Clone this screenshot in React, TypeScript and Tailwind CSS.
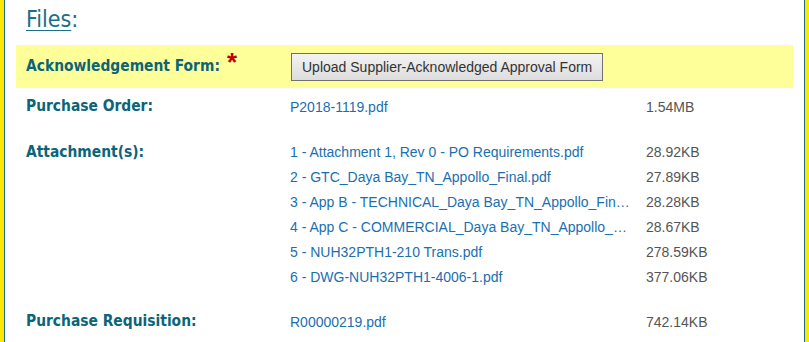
import React from "react";

const attachments = [
  { name: "1 - Attachment 1, Rev 0 - PO Requirements.pdf", size: "28.92KB" },
  { name: "2 - GTC_Daya Bay_TN_Appollo_Final.pdf", size: "27.89KB" },
  { name: "3 - App B - TECHNICAL_Daya Bay_TN_Appollo_Final.pdf", size: "28.28KB" },
  { name: "4 - App C - COMMERCIAL_Daya Bay_TN_Appollo_Final.pdf", size: "28.67KB" },
  { name: "5 - NUH32PTH1-210 Trans.pdf", size: "278.59KB" },
  { name: "6 - DWG-NUH32PTH1-4006-1.pdf", size: "377.06KB" },
];

const labelCls =
  "w-[264px] shrink-0 font-bold text-[15.4px] text-[#0b6478] [font-family:'DejaVu_Sans_Condensed','DejaVu_Sans',sans-serif] [font-stretch:condensed]";
const linkCls =
  "block w-[342px] truncate text-[14px] text-[#1a6fb0] [font-family:'Liberation_Sans',Arial,sans-serif]";
const sizeCls =
  "text-[14px] text-[#555555] [font-family:'Liberation_Sans',Arial,sans-serif]";

export default function App() {
  return (
    <div className="w-[809px] h-[342px] overflow-hidden bg-[#ffe600] px-[4px]">
      <div className="h-full border-x border-[#1b6f86] bg-white">
        <div className="pl-[21px] pt-[3px] h-[45px] text-[23px] leading-[32px] text-[#1b6f86] [font-family:'DejaVu_Sans_Condensed','DejaVu_Sans',sans-serif] [font-stretch:condensed]">
          <span className="underline underline-offset-[3px] decoration-1">Files</span>:
        </div>

        <div className="mx-[11px] h-[43px] bg-[#ffff99] pl-[10px] flex items-center">
          <div className={labelCls + " pt-[1px]"}>
            Acknowledgement Form:
            <span className="relative top-[0px] ml-[7px] text-[#c00000] text-[26px] leading-[0] font-bold [font-family:'Liberation_Sans',Arial,sans-serif]">
              *
            </span>
          </div>
          <button className="h-[28px] ml-[1px] mt-[1px] px-[10px] whitespace-nowrap border border-[#707070] bg-gradient-to-b from-[#f3f3f3] to-[#dddddd] text-[14px] leading-[26px] text-[#333333] [font-family:'Liberation_Sans',Arial,sans-serif]">
            Upload Supplier-Acknowledged Approval Form
          </button>
        </div>

        <div className="mx-[11px] pl-[10px] flex items-center h-[38px]">
          <div className={labelCls}>Purchase Order:</div>
          <a className={linkCls}>P2018-1119.pdf</a>
          <span className={sizeCls + " ml-[14px]"}>1.54MB</span>
        </div>

        <div className="mx-[11px] pl-[10px] flex pt-[14px]">
          <div className={labelCls + " leading-[24px]"}>Attachment(s):</div>
          <div className="flex flex-col">
            {attachments.map((a) => (
              <div key={a.name} className="flex items-center h-[25px]">
                <a className={linkCls}>{a.name}</a>
                <span className={sizeCls + " ml-[14px]"}>{a.size}</span>
              </div>
            ))}
          </div>
        </div>

        <div className="mx-[11px] pl-[10px] flex items-center h-[40px] mt-[12px]">
          <div className={labelCls}>Purchase Requisition:</div>
          <a className={linkCls}>R00000219.pdf</a>
          <span className={sizeCls + " ml-[14px]"}>742.14KB</span>
        </div>
      </div>
    </div>
  );
}
